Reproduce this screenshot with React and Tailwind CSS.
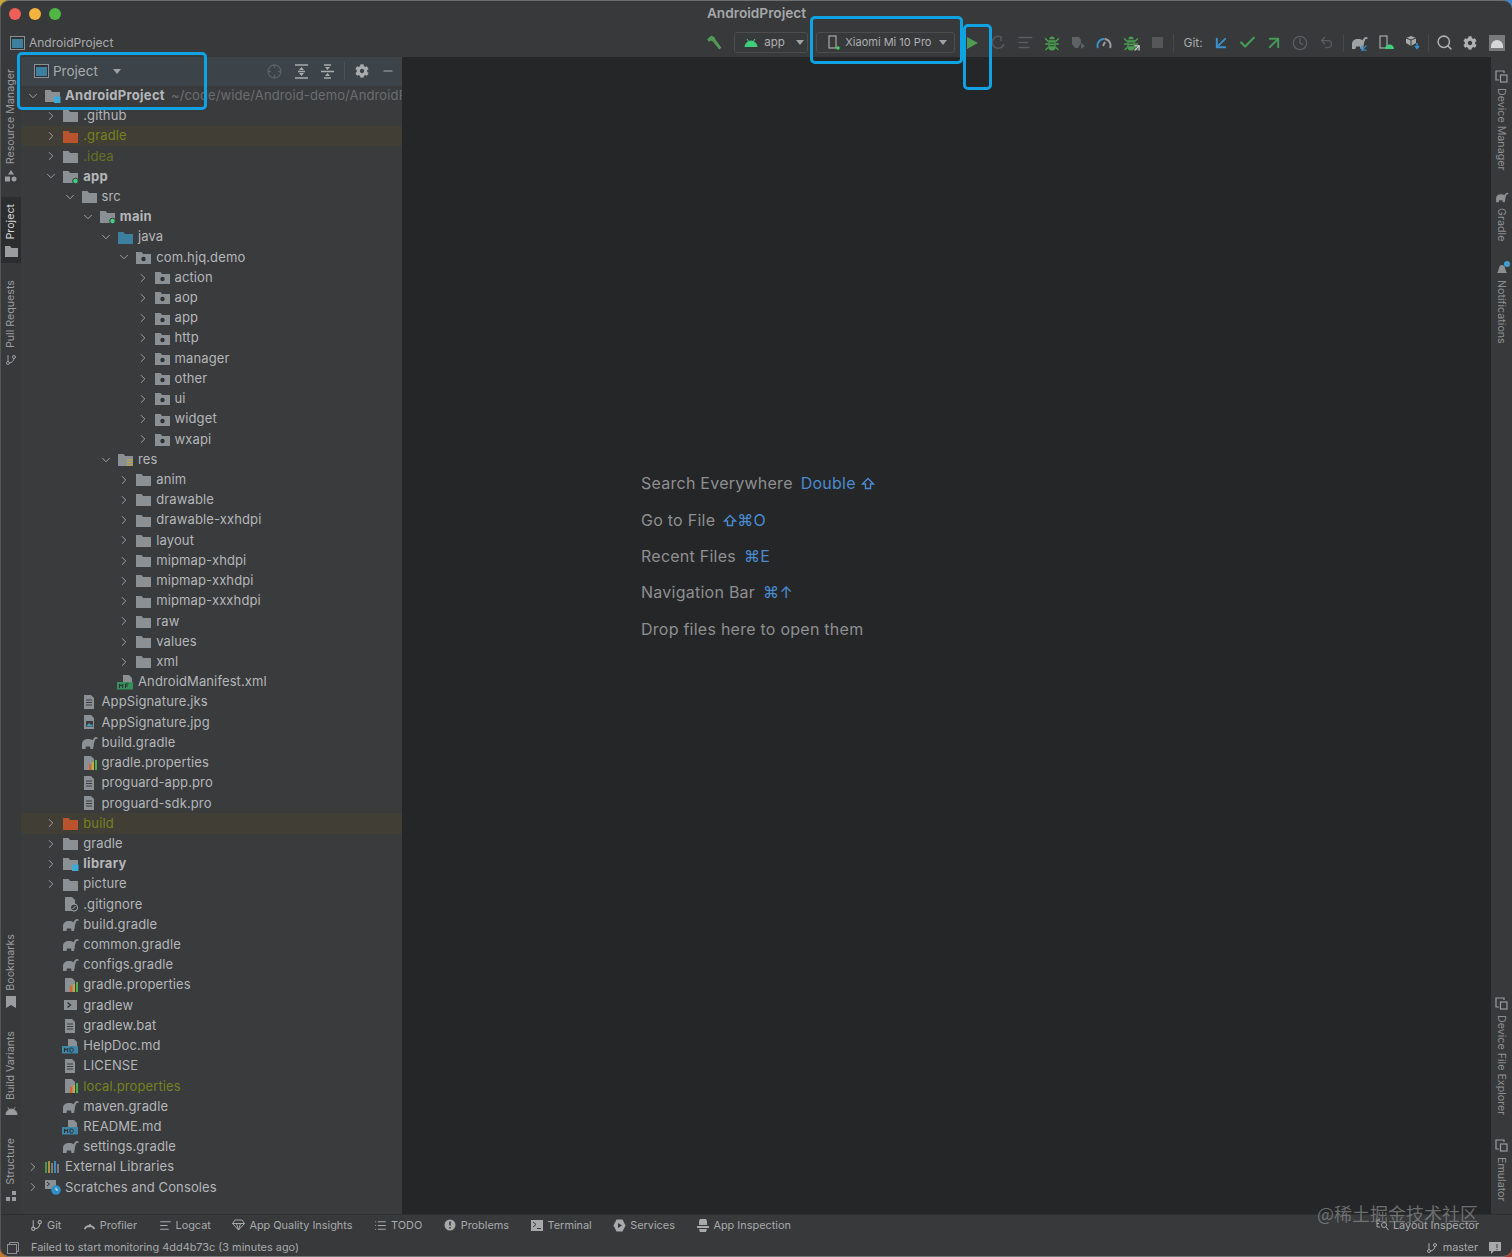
import { ChevronDown, ChevronRight, Search, Undo2, Clock, Check, ArrowDownLeft, ArrowUpRight, Minus, GitBranch, List, AlignLeft } from "lucide-react";
import { FaCog } from "react-icons/fa";

const GRAY = "#8b9095";

const Folder = ({ color = GRAY, children }) => (
  <svg width="17" height="15" viewBox="0 0 17 15" className="shrink-0">
    <path d="M1 2h5.5l1.6 2H16v10H1z" fill={color} />
    {children}
  </svg>
);

const PackageFolder = () => (
  <Folder>
    <circle cx="8.5" cy="9" r="2.2" fill="#2f3133" />
  </Folder>
);

const ModuleFolder = ({ dot }) => (
  <Folder>
    {dot === "square" ? <rect x="10" y="8.5" width="6.5" height="6.5" fill="#3fa9d8" /> : <circle cx="13.5" cy="12" r="2.8" fill="#3fcf7a" stroke="#3a3b3d" />}
  </Folder>
);

const ResFolder = () => (
  <Folder>
    <path d="M10 8h6M10 10.5h6M10 13h6" stroke="#c9a93b" strokeWidth="1.2" />
  </Folder>
);

const FileBase = ({ children, lines = true }) => (
  <svg width="17" height="16" viewBox="0 0 17 16" className="shrink-0">
    <path d="M3 1h7l3 3v11H3z" fill={GRAY} />
    {lines && <path d="M5 6h6M5 8.5h6M5 11h6" stroke="#3a3b3d" strokeWidth="1" />}
    {children}
  </svg>
);

const PropsFile = () => (
  <FileBase lines={false}>
    <rect x="8" y="9" width="2" height="6" fill="#d9622e" />
    <rect x="11" y="7" width="2" height="8" fill="#c9a93b" />
    <rect x="14" y="5" width="2" height="10" fill="#4caf50" />
  </FileBase>
);

const ImgFile = () => (
  <FileBase lines={false}>
    <rect x="5" y="7" width="7" height="6" fill="#3a3b3d" />
    <path d="M5.5 12l2.5-3 2 2 1.5-1v2.5h-6z" fill="#4f9bb5" />
  </FileBase>
);

const IgnoreFile = () => (
  <FileBase lines={false}>
    <circle cx="12" cy="11.5" r="3.6" fill="#3a3b3d" stroke="#a7abaf" />
    <path d="M10.5 13l3-3" stroke="#a7abaf" />
  </FileBase>
);

const MdFile = () => (
  <svg width="17" height="16" viewBox="0 0 17 16" className="shrink-0">
    <path d="M6 1h6l3 3v5H6z" fill={GRAY} />
    <rect x="0" y="8" width="16" height="7.5" fill="#3d86a8" />
    <path d="M2.5 14v-4l1.6 2.2L5.7 10v4M8 10v4h1.5c2.4 0 2.4-4 0-4z" stroke="#2b3236" fill="none" strokeWidth="1" />
  </svg>
);

const ManifestFile = () => (
  <svg width="17" height="16" viewBox="0 0 17 16" className="shrink-0">
    <path d="M6 1h6l3 3v5H6z" fill={GRAY} />
    <rect x="0" y="8" width="16" height="7.5" fill="#35905c" />
    <path d="M2.5 14v-4l1.6 2.2L5.7 10v4M8.5 14v-4h3M8.5 12h2.5" stroke="#2b3236" fill="none" strokeWidth="1" />
  </svg>
);

const ShellFile = () => (
  <svg width="17" height="16" viewBox="0 0 17 16" className="shrink-0">
    <rect x="2" y="3" width="13" height="10" fill={GRAY} />
    <path d="M5.5 5.5L8.5 8l-3 2.5" stroke="#2f3133" strokeWidth="1.4" fill="none" />
  </svg>
);

const Elephant = ({ color = GRAY, size = 17 }) => (
  <svg width={size} height={size - 3} viewBox="0 0 17 14" className="shrink-0">
    <path d="M1 13V8C1 5 3.500 3 7 3c2 0 3.500.5 4.500 1.200C12.500 2.500 13.500 1 15 1c1 0 1.800.5 1.800 1.500L15.500 3c-.5-.5-1 0-1.500 1l-1 3c-.2 2-.5 4-1 6H9.500L9 10.500H5L4.500 13z" fill={color} />
  </svg>
);

const LibIcon = () => (
  <svg width="17" height="15" viewBox="0 0 17 15" className="shrink-0">
    <path d="M2 2v11" stroke="#4caf50" strokeWidth="1.6" />
    <path d="M5 1v12" stroke="#c9a93b" strokeWidth="1.6" />
    <path d="M8 3v10" stroke={GRAY} strokeWidth="1.6" />
    <path d="M11 1v12" stroke="#3f9fd6" strokeWidth="1.6" />
    <path d="M14 4v9" stroke={GRAY} strokeWidth="1.6" />
  </svg>
);

const ScratchIcon = () => (
  <svg width="17" height="16" viewBox="0 0 17 16" className="shrink-0">
    <rect x="1" y="1" width="11" height="9" fill={GRAY} />
    <path d="M3 3l2.500 2L3 7" stroke="#2f3133" fill="none" />
    <circle cx="12" cy="11" r="4.800" fill="#2f8fc7" />
    <path d="M12 8.500V11h2" stroke="#dfe8ee" fill="none" />
  </svg>
);

const icons = {
  folder: <Folder />,
  orange: <Folder color="#b8532d" />,
  blue: <Folder color="#3d7f9e" />,
  pkg: <PackageFolder />,
  green: <ModuleFolder dot="green" />,
  square: <ModuleFolder dot="square" />,
  res: <ResFolder />,
  file: <FileBase />,
  img: <ImgFile />,
  props: <PropsFile />,
  ignore: <IgnoreFile />,
  md: <MdFile />,
  manifest: <ManifestFile />,
  shell: <ShellFile />,
  gradle: <Elephant />,
  lib: <LibIcon />,
  scratch: <ScratchIcon />,
};

const tree = [
  { t: ".github", l: 1, i: "folder", a: "r" },
  { t: ".gradle", l: 1, i: "orange", a: "r", olive: true, hl: true },
  { t: ".idea", l: 1, i: "folder", a: "r", dim: true },
  { t: "app", l: 1, i: "green", a: "d", b: true },
  { t: "src", l: 2, i: "folder", a: "d" },
  { t: "main", l: 3, i: "green", a: "d", b: true },
  { t: "java", l: 4, i: "blue", a: "d" },
  { t: "com.hjq.demo", l: 5, i: "pkg", a: "d" },
  { t: "action", l: 6, i: "pkg", a: "r" },
  { t: "aop", l: 6, i: "pkg", a: "r" },
  { t: "app", l: 6, i: "pkg", a: "r" },
  { t: "http", l: 6, i: "pkg", a: "r" },
  { t: "manager", l: 6, i: "pkg", a: "r" },
  { t: "other", l: 6, i: "pkg", a: "r" },
  { t: "ui", l: 6, i: "pkg", a: "r" },
  { t: "widget", l: 6, i: "pkg", a: "r" },
  { t: "wxapi", l: 6, i: "pkg", a: "r" },
  { t: "res", l: 4, i: "res", a: "d" },
  { t: "anim", l: 5, i: "folder", a: "r" },
  { t: "drawable", l: 5, i: "folder", a: "r" },
  { t: "drawable-xxhdpi", l: 5, i: "folder", a: "r" },
  { t: "layout", l: 5, i: "folder", a: "r" },
  { t: "mipmap-xhdpi", l: 5, i: "folder", a: "r" },
  { t: "mipmap-xxhdpi", l: 5, i: "folder", a: "r" },
  { t: "mipmap-xxxhdpi", l: 5, i: "folder", a: "r" },
  { t: "raw", l: 5, i: "folder", a: "r" },
  { t: "values", l: 5, i: "folder", a: "r" },
  { t: "xml", l: 5, i: "folder", a: "r" },
  { t: "AndroidManifest.xml", l: 4, i: "manifest" },
  { t: "AppSignature.jks", l: 2, i: "file" },
  { t: "AppSignature.jpg", l: 2, i: "img" },
  { t: "build.gradle", l: 2, i: "gradle" },
  { t: "gradle.properties", l: 2, i: "props" },
  { t: "proguard-app.pro", l: 2, i: "file" },
  { t: "proguard-sdk.pro", l: 2, i: "file" },
  { t: "build", l: 1, i: "orange", a: "r", olive: true, hl: true },
  { t: "gradle", l: 1, i: "folder", a: "r" },
  { t: "library", l: 1, i: "square", a: "r", b: true },
  { t: "picture", l: 1, i: "folder", a: "r" },
  { t: ".gitignore", l: 1, i: "ignore" },
  { t: "build.gradle", l: 1, i: "gradle" },
  { t: "common.gradle", l: 1, i: "gradle" },
  { t: "configs.gradle", l: 1, i: "gradle" },
  { t: "gradle.properties", l: 1, i: "props" },
  { t: "gradlew", l: 1, i: "shell" },
  { t: "gradlew.bat", l: 1, i: "file" },
  { t: "HelpDoc.md", l: 1, i: "md" },
  { t: "LICENSE", l: 1, i: "file" },
  { t: "local.properties", l: 1, i: "props", olive: true },
  { t: "maven.gradle", l: 1, i: "gradle" },
  { t: "README.md", l: 1, i: "md" },
  { t: "settings.gradle", l: 1, i: "gradle" },
  { t: "External Libraries", l: 0, i: "lib", a: "r" },
  { t: "Scratches and Consoles", l: 0, i: "scratch", a: "r" },
];

const TreeRow = ({ row }) => (
  <div
    className={`flex items-center h-[20.23px] whitespace-nowrap ${row.hl ? "bg-[#413e35]" : ""}`}
    style={{ paddingLeft: 3 + row.l * 18.25 }}
  >
    <span className="w-[18px] flex justify-center shrink-0 text-[#a4a7aa]">
      {row.a === "r" && <ChevronRight size={14} strokeWidth={1.6} />}
      {row.a === "d" && <ChevronDown size={14} strokeWidth={1.6} />}
    </span>
    <span className="w-[23px] shrink-0 flex pl-[2px]">{icons[row.i]}</span>
    <span
      className={`text-[13px] ${row.b ? "font-bold tracking-[0.3px]" : "tracking-[0.12px]"} ${
        row.olive ? "text-[#76821f]" : row.dim ? "text-[#666f22]" : "text-[#b4b7ba]"
      }`}
    >
      {row.t}
    </span>
  </div>
);

const LeftTab = ({ label, icon, active, className = "" }) => (
  <div className={`flex flex-col items-center gap-[6px] w-[20px] py-[6px] ${active ? "bg-[#2c2d2f] text-[#d8d9da]" : "text-[#9a9c9f]"} ${className}`}>
    <span className="[writing-mode:vertical-rl] rotate-180 text-[10.7px] leading-[20px] whitespace-nowrap">{label}</span>
    {icon}
  </div>
);

const RightTab = ({ label, icon, className = "" }) => (
  <div className={`flex flex-col items-center gap-[5px] w-[21px] text-[#8d8f92] ${className}`}>
    {icon}
    <span className="[writing-mode:vertical-rl] text-[10.7px] leading-[21px] whitespace-nowrap">{label}</span>
  </div>
);

const DeviceIcon = () => (
  <svg width="13" height="13" viewBox="0 0 13 13" fill="none" stroke="#9a9c9f" strokeWidth="1.2">
    <path d="M9 3V1H1v9h3" />
    <rect x="5.500" y="5" width="6.500" height="7" />
  </svg>
);

const Slot = ({ children }) => (
  <span className="w-[26.4px] h-[20px] flex items-center justify-center shrink-0">{children}</span>
);

const Sep = ({ className = "mx-[2px]" }) => <span className={`w-px h-[18px] bg-[#46484a] shrink-0 ${className}`} />;

const BugIcon = ({ color = "#4a9d50" }) => (
  <svg width="16" height="16" viewBox="0 0 15 15">
    <path d="M4 5h7v6a3.500 3.500 0 0 1-7 0zM5 4a2.500 2.500 0 0 1 5 0z" fill={color} />
    <path d="M1 3l3 3M14 3l-3 3M1 8.500h3M14 8.500h-3M1.500 14L4 11.500M13.500 14L11 11.500" stroke={color} strokeWidth="1.300" />
    <path d="M5 7.500h5M5 10h5" stroke="#37393b" />
  </svg>
);

const Bottom = ({ icon, label, className = "" }) => (
  <div className={`flex items-center gap-[4px] text-[10.9px] text-[#a7a9ab] whitespace-nowrap ${className}`}>
    <span className="w-[13px] flex justify-center shrink-0">{icon}</span>
    {label}
  </div>
);

const HintKey = ({ children }) => <span className="text-[#4a8bd0] ml-[8px]">{children}</span>;

const ShiftGlyph = () => (
  <svg width="14" height="13" viewBox="0 0 14 13" fill="none" stroke="#4a8bd0" strokeWidth="1.400" className="inline-block align-[-1px]">
    <path d="M7 1.500L12.500 7H9.500v4.500h-5V7h-3z" />
  </svg>
);

const Callout = ({ className }) => (
  <div className={`absolute border-[3px] border-[#10a3e3] rounded-[5px] pointer-events-none ${className}`} />
);

export default function App() {
  return (
    <div className="relative w-[1512px] h-[1257px] overflow-hidden bg-[#4a4a4a] font-['Inter','Noto_Sans_CJK_SC',sans-serif]">
      {/* bits of desktop wallpaper behind the rounded window corners */}
      <span className="absolute left-0 top-0 w-[12px] h-[12px] bg-[#c9a83a]" />
      <span className="absolute right-0 top-0 w-[12px] h-[12px] bg-[#3f86c9]" />
      <span className="absolute left-0 bottom-0 w-[12px] h-[12px] bg-[#c9772a]" />
      <span className="absolute right-0 bottom-0 w-[12px] h-[12px] bg-[#a8402c]" />

      <div className="relative flex flex-col h-full rounded-[9px] overflow-hidden border-t border-[#6d6d6d] border-l border-l-[#555] border-b border-b-[#777] bg-[#37393b]">
        {/* title bar */}
        <div className="relative flex items-center justify-center h-[27px] shrink-0 pb-[2px]">
          <div className="absolute left-[8px] top-[7px] flex gap-[8px]">
            <span className="w-[12px] h-[12px] rounded-full bg-[#ed5f57]" />
            <span className="w-[12px] h-[12px] rounded-full bg-[#f4b23e]" />
            <span className="w-[12px] h-[12px] rounded-full bg-[#4fb543]" />
          </div>
          <span className="text-[13.7px] font-semibold text-[#a5a7a9]">AndroidProject</span>
        </div>

        {/* toolbar */}
        <div className="flex items-center h-[29px] shrink-0 pl-[9px] pr-[2px]">
          <svg width="15" height="14" viewBox="0 0 15 14" className="shrink-0">
            <rect x="0.500" y="0.500" width="14" height="13" fill="#2f3133" stroke="#8b9095" />
            <rect x="2" y="3" width="11" height="9" fill="#3d7f9e" />
          </svg>
          <span className="ml-[4px] text-[12px] text-[#a9abad]">AndroidProject</span>
          <div className="flex items-center ml-auto">
            <Slot>
              <svg width="17" height="17" viewBox="0 0 16 16">
                <path d="M1 5l4-3.500 3 1.500 1 2.500 5.500 7.500-2 1.500L6.500 7 4 6 3 7.500z" fill="#4f9a55" />
              </svg>
            </Slot>
            <div className="ml-[7px] w-[74px] h-[21px] border border-[#4b4d4f] rounded-[3px] flex items-center pl-[9px] gap-[6px] text-[11.5px] text-[#aeb0b2]">
              <svg width="14" height="9" viewBox="0 0 14 9"><path d="M1 9a6 6 0 0 1 12 0zM3 1l2 3M11 1L9 4" fill="#3fcf7a" stroke="#3fcf7a" /></svg>
              app
              <span className="ml-[5px] w-0 h-0 border-x-[4.500px] border-x-transparent border-t-[5px] border-t-[#a0a2a4]" />
            </div>
            <div className="ml-[8px] w-[139px] h-[21px] border border-[#4b4d4f] rounded-[3px] flex items-center pl-[11px] gap-[5px] text-[11px] text-[#aeb0b2] whitespace-nowrap">
              <svg width="12" height="15" viewBox="0 0 12 15" fill="none" className="shrink-0">
                <rect x="1" y="1" width="7" height="12" stroke="#a7a9ab" strokeWidth="1.200" />
                <circle cx="10" cy="13" r="1.800" fill="#3fcf5a" />
              </svg>
              Xiaomi Mi 10 Pro
              <span className="ml-[3px] w-0 h-0 border-x-[4.500px] border-x-transparent border-t-[5px] border-t-[#a0a2a4]" />
            </div>
            <span className="w-[4px]" />
            <Slot>
              <svg width="13" height="14" viewBox="0 0 13 14"><path d="M1 1l11 6-11 6z" fill="#4f9a55" /></svg>
            </Slot>
            <Slot>
              <svg width="15" height="15" viewBox="0 0 15 15" fill="none" stroke="#55585a" strokeWidth="1.600">
                <path d="M9 1.500A6 6 0 1 0 13 9M10 1v5" />
              </svg>
            </Slot>
            <Slot><AlignLeft size={17} color="#5a5d5f" /></Slot>
            <Slot><BugIcon /></Slot>
            <Slot>
              <svg width="15" height="15" viewBox="0 0 15 15"><path d="M1 2h7l2 3v3l-3 5H4L1 9z" fill="#5f6264" /><path d="M10 8l4 3-4 3z" fill="#5f6264" /></svg>
            </Slot>
            <Slot>
              <svg width="16" height="12" viewBox="0 0 16 12" fill="none" strokeWidth="2">
                <path d="M2 11A6.500 6.500 0 0 1 8 2" stroke="#3d8fc4" />
                <path d="M8.500 2A6.500 6.500 0 0 1 14 11" stroke="#9a9c9f" />
                <path d="M7 9l2-4" stroke="#9a9c9f" />
              </svg>
            </Slot>
            <Slot>
              <span className="relative flex">
                <BugIcon />
                <ArrowUpRight size={10} strokeWidth={3} color="#cfd1d3" className="absolute -right-[3px] -bottom-[2px]" />
              </span>
            </Slot>
            <Slot><span className="w-[11px] h-[11px] bg-[#555759]" /></Slot>
            <Sep className="mx-[3px]" />
            <span className="ml-[6px] mr-[5px] text-[12px] text-[#a9abad]">Git:</span>
            <Slot><ArrowDownLeft size={20} strokeWidth={2.400} color="#3a8fcb" /></Slot>
            <Slot><Check size={19} strokeWidth={2.800} color="#459a55" /></Slot>
            <Slot><ArrowUpRight size={20} strokeWidth={2.400} color="#459a55" /></Slot>
            <Slot><Clock size={16} color="#5b5e60" /></Slot>
            <Slot><Undo2 size={15} color="#5b5e60" /></Slot>
            <Sep className="mx-[3px]" />
            <Slot>
              <span className="relative flex">
                <Elephant color="#a0a3a6" />
                <ArrowDownLeft size={10} strokeWidth={3} color="#3a8fcb" className="absolute -right-[1px] -bottom-[3px]" />
              </span>
            </Slot>
            <Slot>
              <svg width="16" height="15" viewBox="0 0 16 15" fill="none">
                <rect x="2" y="1" width="7" height="12" stroke="#a7a9ab" strokeWidth="1.200" />
                <path d="M7 14a4.500 4.500 0 0 1 9 0z" fill="#3fcf7a" />
              </svg>
            </Slot>
            <Slot>
              <svg width="16" height="15" viewBox="0 0 16 15">
                <path d="M1 3l5-2 5 2v5l-5 3-5-3z" fill="#a7a9ab" />
                <path d="M6 5v6M1 3l5 2 5-2" stroke="#37393b" fill="none" />
                <path d="M12 8v5M10 11l2 2.500 2-2.500" stroke="#3a8fcb" strokeWidth="1.500" fill="none" />
              </svg>
            </Slot>
            <Sep />
            <Slot><Search size={17} strokeWidth={2.200} color="#aeb0b2" /></Slot>
            <Slot><FaCog size={14} color="#aeb0b2" /></Slot>
            <Slot>
              <span className="w-[16px] h-[16px] bg-[#77797b] flex items-end justify-center overflow-hidden">
                <span className="w-[12px] h-[8px] rounded-t-full bg-[#d6d7d8] mb-[3px]" />
              </span>
            </Slot>
          </div>
        </div>

        {/* main */}
        <div className="flex flex-1 min-h-0">
          <div className="w-[20px] shrink-0 flex flex-col pt-[6px]">
            <LeftTab
              label="Resource Manager"
              icon={
                <svg width="12" height="12" viewBox="0 0 12 12" fill="#9a9c9f">
                  <path d="M6 0l3 4.500H3z" /><rect x="0" y="6.500" width="5" height="5" /><circle cx="9" cy="9" r="2.500" />
                </svg>
              }
            />
            <LeftTab
              className="mt-[9px] pt-[7px]"
              active
              label="Project"
              icon={<svg width="13" height="11" viewBox="0 0 13 11"><path d="M0 0h5l1.500 2H13v9H0z" fill="#9a9c9f" /></svg>}
            />
            <LeftTab
              className="mt-[11px]"
              label="Pull Requests"
              icon={<GitBranch size={12} color="#9a9c9f" />}
            />
            <div className="mt-auto flex flex-col gap-[11px] pb-[6px]">
              <LeftTab
                label="Bookmarks"
                icon={<svg width="10" height="12" viewBox="0 0 10 12"><path d="M0 0h10v12L5 9l-5 3z" fill="#9a9c9f" /></svg>}
              />
              <LeftTab
                label="Build Variants"
                icon={<svg width="13" height="9" viewBox="0 0 14 9"><path d="M1 9a6 6 0 0 1 12 0zM3 1l2 3M11 1L9 4" fill="#9a9c9f" stroke="#9a9c9f" /></svg>}
              />
              <LeftTab
                label="Structure"
                icon={<svg width="11" height="11" viewBox="0 0 11 11" fill="#9a9c9f"><rect x="6" y="0" width="4" height="4" /><rect x="0" y="6" width="4" height="4" /><rect x="6" y="6" width="4" height="4" /></svg>}
              />
            </div>
          </div>

          {/* project panel */}
          <div className="w-[381px] shrink-0 bg-[#3a3b3d] overflow-hidden">
            <div className="flex items-center h-[28.5px] bg-[#3c4449] pl-[13px] pr-[7px]">
              <svg width="15" height="14" viewBox="0 0 15 14" className="shrink-0">
                <rect x="0.500" y="0.500" width="14" height="13" fill="#2f3133" stroke="#8b9095" />
                <rect x="2" y="3" width="11" height="9" fill="#3d7f9e" />
              </svg>
              <span className="ml-[4px] text-[13.5px] text-[#a9abad]">Project</span>
              <span className="ml-[15px] w-0 h-0 border-x-[4.500px] border-x-transparent border-t-[5px] border-t-[#a0a2a4]" />
              <div className="ml-auto flex items-center text-[#a9abad]">
                <svg width="15" height="15" viewBox="0 0 15 15" fill="none" stroke="#5c6063" strokeWidth="1.300">
                  <circle cx="7.500" cy="7.500" r="6.500" />
                  <path d="M7.500 1v3M7.500 11v3M1 7.500h3M11 7.500h3" />
                </svg>
                <svg className="ml-[13px]" width="13" height="15" viewBox="0 0 13 15" fill="none" stroke="#a9abad" strokeWidth="1.300">
                  <path d="M0 1h13M0 14h13M3 7.500h7" />
                  <path d="M6.500 3L4 6h5zM6.500 12L4 9h5z" fill="#a9abad" stroke="none" />
                </svg>
                <svg className="ml-[13px]" width="13" height="15" viewBox="0 0 13 15" fill="none" stroke="#a9abad" strokeWidth="1.300">
                  <path d="M0 7.500h13M3 1h7M3 14h7" />
                  <path d="M6.500 6L4 3h5zM6.500 9L4 12h5z" fill="#a9abad" stroke="none" />
                </svg>
                <span className="w-px h-[18px] bg-[#4b5155] ml-[10px]" />
                <FaCog size={14} className="ml-[10px]" />
                <Minus size={14} strokeWidth={2} className="ml-[12px]" />
              </div>
            </div>
            <div className="flex items-center h-[20.23px] pl-[3px] whitespace-nowrap">
              <span className="w-[18px] flex justify-center shrink-0 text-[#a4a7aa]">
                <ChevronDown size={14} strokeWidth={1.6} />
              </span>
              <span className="w-[23px] shrink-0 flex pl-[2px]"><ModuleFolder dot="square" /></span>
              <span className="text-[13px] font-bold tracking-[0.3px] text-[#b4b7ba]">AndroidProject</span>
              <span className="ml-[6px] text-[13px] tracking-[0.12px] text-[#6b6e71]">~/code/wide/Android-demo/AndroidProject</span>
            </div>
            {tree.map((row, i) => (
              <TreeRow key={i} row={row} />
            ))}
          </div>

          {/* editor */}
          <div className="flex-1 bg-[#252627] pl-[239px] pt-[408px] text-[16px] text-[#8e8f91] tracking-[0.25px]">
            <div className="flex items-center h-[36.4px] whitespace-nowrap">Search Everywhere<HintKey>Double <ShiftGlyph /></HintKey></div>
            <div className="flex items-center h-[36.4px] whitespace-nowrap">Go to File<HintKey><ShiftGlyph />⌘O</HintKey></div>
            <div className="flex items-center h-[36.4px] whitespace-nowrap">Recent Files<HintKey>⌘E</HintKey></div>
            <div className="flex items-center h-[36.4px] whitespace-nowrap">Navigation Bar<HintKey>⌘↑</HintKey></div>
            <div className="flex items-center h-[36.4px] whitespace-nowrap">Drop files here to open them</div>
          </div>

          <div className="w-[21px] shrink-0 flex flex-col pt-[13px]">
            <RightTab label="Device Manager" icon={<DeviceIcon />} />
            <RightTab className="mt-[22px]" label="Gradle" icon={<Elephant color="#8d8f92" size={14} />} />
            <RightTab
              className="mt-[21px]"
              label="Notifications"
              icon={
                <span className="relative flex">
                  <svg width="12" height="12" viewBox="0 0 12 12"><path d="M1 10c2-1 1-8 5-8s3 7 5 8z" fill="#8d8f92" /></svg>
                  <span className="absolute -right-[2px] -top-[2px] w-[6px] h-[6px] rounded-full bg-[#3f9fd6]" />
                </span>
              }
            />
            <div className="mt-auto flex flex-col gap-[24px] pb-[12px]">
              <RightTab label="Device File Explorer" icon={<DeviceIcon />} />
              <RightTab label="Emulator" icon={<DeviceIcon />} />
            </div>
          </div>
        </div>

        {/* tool window bar */}
        <div className="flex items-center h-[22px] shrink-0 pl-[29px] pr-[33px] gap-[21.5px] border-t border-[#2e2f30]">
          <Bottom label="Git" icon={<GitBranch size={13} />} />
          <Bottom label="Profiler" icon={<svg width="13" height="10" viewBox="0 0 16 12" fill="none" stroke="currentColor" strokeWidth="2"><path d="M2 11A6.500 6.500 0 0 1 14 11M7 9l2-4" /></svg>} />
          <Bottom label="Logcat" icon={<AlignLeft size={13} />} />
          <Bottom label="App Quality Insights" icon={<svg width="13" height="12" viewBox="0 0 13 12" fill="none" stroke="currentColor"><path d="M3 1h7l2.500 3.500L6.500 11 .5 4.500zM.5 4.500h12M4.500 4.500l2 6.500 2-6.500" /></svg>} />
          <Bottom label="TODO" icon={<List size={13} />} />
          <Bottom label="Problems" icon={<svg width="12" height="12" viewBox="0 0 12 12"><circle cx="6" cy="6" r="5.500" fill="currentColor" /><path d="M6 2.500v4M6 8v1.500" stroke="#37393b" strokeWidth="1.600" /></svg>} />
          <Bottom label="Terminal" icon={<svg width="12" height="11" viewBox="0 0 12 11"><rect width="12" height="11" fill="currentColor" /><path d="M2 2l3 2.500L2 7M6 8.500h4" stroke="#37393b" fill="none" /></svg>} />
          <Bottom label="Services" icon={<svg width="13" height="13" viewBox="0 0 13 13"><path d="M3.500 .5h6l3 6-3 6h-6l-3-6z" fill="currentColor" /><path d="M5 4l4 2.500L5 9z" fill="#37393b" /></svg>} />
          <Bottom label="App Inspection" icon={<svg width="12" height="14" viewBox="0 0 12 14"><path d="M3 1h6l1 2v4H2V3zM0 8h12v2H0zM2 11h8l-1 3H3z" fill="currentColor" /></svg>} />
          <Bottom
            className="ml-auto"
            label="Layout Inspector"
            icon={<svg width="13" height="12" viewBox="0 0 13 12" fill="none" stroke="currentColor"><path d="M1 1h3M1 1v7h3M1 4.500h2" /><circle cx="8" cy="6" r="2.500" /><path d="M10 8l2.500 3" /></svg>}
          />
        </div>

        {/* status bar */}
        <div className="flex items-center h-[20px] shrink-0 pl-[6px] pr-[11px] pt-[3px] text-[10.9px] text-[#a7a9ab] whitespace-nowrap">
          <svg width="12" height="12" viewBox="0 0 12 12" fill="none" stroke="#8d8f92"><path d="M2.500 2.500V.5h9v9h-2" /><rect x=".5" y="2.500" width="9" height="9" /></svg>
          <span className="ml-[12px]">Failed to start monitoring 4dd4b73c (3 minutes ago)</span>
          <GitBranch size={12} className="ml-auto" />
          <span className="ml-[5px]">master</span>
          <svg className="ml-[11px]" width="12" height="12" viewBox="0 0 12 12"><path d="M0 0h12v9H5l-3 3V9H0z" fill="#a7a9ab" /><path d="M8 2v4M8 7v1" stroke="#37393b" /></svg>
        </div>
      </div>

      {/* callouts drawn on top of the shot */}
      <Callout className="left-[17px] top-[52px] w-[190px] h-[58px]" />
      <Callout className="left-[810px] top-[16px] w-[153px] h-[48px]" />
      <Callout className="left-[963px] top-[24px] w-[29px] h-[66px]" />

      <span className="absolute left-[1317px] top-[1200px] text-[18px] text-[#8b8c8e]/70 font-['Noto_Sans_CJK_SC',sans-serif] whitespace-nowrap">
        @稀土掘金技术社区
      </span>
    </div>
  );
}
